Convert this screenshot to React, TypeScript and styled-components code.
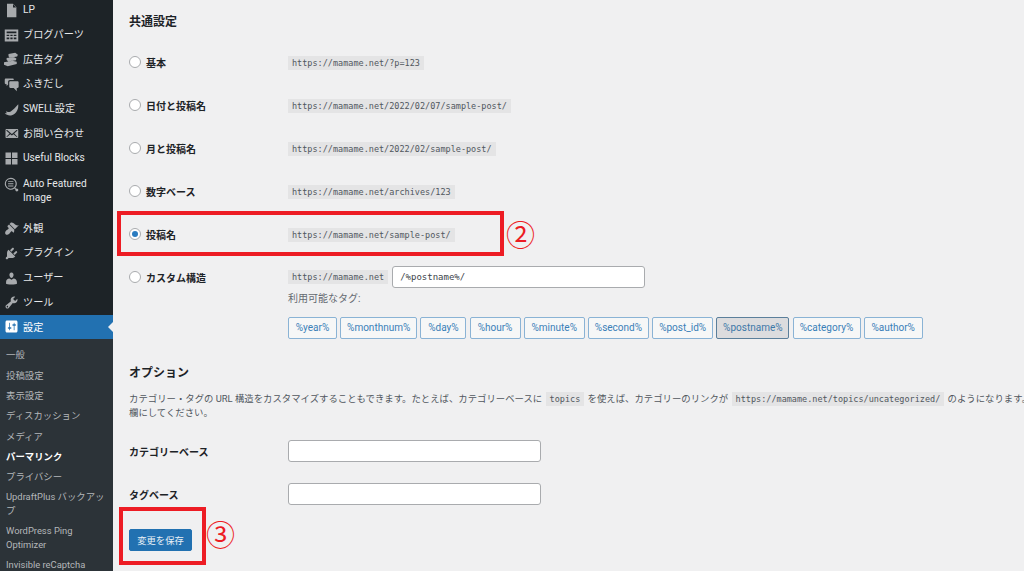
import styled, { createGlobalStyle } from 'styled-components';

const GlobalStyle = createGlobalStyle`
  html, body {
    margin: 0;
    padding: 0;
    width: 1024px;
    height: 571px;
    overflow: hidden;
    background: #f0f0f1;
    font-family: Roboto, "Noto Sans CJK JP", sans-serif;
  }
`;

const PATHS: Record<string, string> = {
  page: 'M4 1h8l4.500 4.500V19H4V1zm8 .8V6h4.200L12 1.800z',
  table: 'M1 2h18v16H1V2zm2.500 2.500V7h13V4.500h-13zm0 4.500v1.800h3.500V9H3.500zm5 0v1.800h3V9h-3zm4.500 0v1.800h3.500V9H13zm-9.500 3.500V15h3.500v-2.500H3.500zm5 0V15h3v-2.500h-3zm4.500 0V15h3.500v-2.500H13z',
  ads: 'M6 2.500 15 1l3.500 2.500-1 2.500L7.500 7.500 6 5.500v-3zM3.500 8 13 6.500l3.500 2-.5 2.500-10 1.500-2.500-2V8zM0 13.500 11 11.500l6 1.500v3L5 19l-5-2v-3.500z',
  comments: 'M2.500 2h9c1 0 1.500.6 1.500 1.500V4H8C6.400 4 5.500 5 5.500 6.500V10l-2 2V9.500h-1C1.600 9.500 1 9 1 8V3.500C1 2.600 1.600 2 2.500 2zm6 3.500h9.500c.9 0 1.500.6 1.500 1.500v6c0 .9-.6 1.500-1.500 1.500h-1V19l-4-4.500H8.500C7.600 14.500 7 13.900 7 13V7c0-.9.6-1.500 1.500-1.500z',
  wing: 'M19 3c.5 6-2 12.500-8.500 14.500-3.500 1-7 0-9.500-2.500 1 .2 2.200.2 3-.3-1-.6-1.500-1.500-1.500-2.500 1.500 1.300 4 1.500 6.500.3 3.500-1.800 6-5.500 10-9.500z',
  email: 'M19 14.500v-9c0-.83-.67-1.500-1.500-1.500H3.490c-.83 0-1.500.67-1.500 1.500v9c0 .83.67 1.500 1.500 1.500H17.500c.83 0 1.500-.67 1.500-1.500zm-1.310-9.110c.33.33.15.67-.03.84L13.600 9.950l3.900 4.060c.12.14.2.36.06.51-.13.16-.43.15-.56.05l-4.370-3.730-2.140 1.950-2.130-1.950-4.370 3.730c-.13.1-.43.11-.56-.05-.14-.15-.06-.37.06-.51l3.900-4.060-4.060-3.720c-.18-.17-.36-.51-.03-.84s.67-.17.95.07l6.240 5.040 6.250-5.040c.28-.24.62-.4.950-.07z',
  grid: 'M2 2h7.300v7.300H2V2zm8.700 0H18v7.300h-7.300V2zM2 10.700h7.300V18H2v-7.300zm8.700 0H18V18h-7.300v-7.300z',
  search: 'M9 1a8 8 0 0 1 6 13.300l1.200 1.200c.9-.2 1.700 0 2.300.6.800.8.800 2 0 2.700-.8.800-2 .8-2.700 0-.6-.6-.8-1.400-.6-2.100l-1.300-1.300A8 8 0 1 1 9 1zm0 1.500a6.500 6.500 0 1 0 0 13 6.500 6.500 0 0 0 0-13zM5.500 5.500h7v1.300h-7V5.500zm0 2.900h7v1.300h-7V8.400zm0 2.800h7v1.300h-7v-1.300z',
  brush: 'M14.480 11.060L7.410 3.990l1.500-1.500c.5-.56 2.300-.47 3.510.32 1.210.8 1.430 1.280 2.910 2.100 1.180.64 2.450 1.260 4.450.85zm-.71.71L6.700 4.700 4.930 6.470c-.39.39-.39 1.020 0 1.410l1.060 1.060c.39.39.39 1.030 0 1.420-.6.6-1.430 1.110-2.210 1.690-.35.26-.7.53-1.010.84-1.340 1.340-1.770 3.500-.6 4.800 1.300 1.170 3.460.74 4.800-.6.31-.31.58-.66.84-1.010.58-.78 1.090-1.610 1.690-2.210.39-.39 1.030-.39 1.420 0l1.060 1.060c.39.39 1.020.39 1.410 0z',
  plugin: 'M13.110 4.360L9.870 7.600 8 5.730l3.240-3.240c.35-.34 1.050-.2 1.560.32.52.51.66 1.210.31 1.550zm-8 1.770l.91-1.120 9.010 9.010-1.190.84c-.71.71-2.630 1.160-3.820 1.160H6.140L4.900 17.260c-.59.59-1.540.59-2.120 0-.59-.58-.59-1.530 0-2.120l1.240-1.240v-3.880c0-1.130.4-3.190 1.090-3.890zm7.260 3.970l3.240-3.240c.34-.35 1.040-.21 1.550.31.52.51.66 1.210.31 1.550l-3.240 3.250z',
  user: 'M10 9.250c-2.270 0-2.730-3.440-2.730-3.440C7 4.020 7.820 2 9.970 2c2.160 0 2.980 2.020 2.710 3.810 0 0-.41 3.440-2.680 3.440zm0 2.570L12.720 10c2.390 0 4.520 2.330 4.520 4.530v2.490s-3.650 1.130-7.240 1.130c-3.650 0-7.240-1.130-7.240-1.130v-2.490c0-2.250 1.940-4.480 4.470-4.480z',
  wrench: 'M16.680 9.770c-1.340 1.340-3.300 1.670-4.950.99l-5.410 6.520c-.99.99-2.590.99-3.580 0s-.99-2.590 0-3.570l6.520-5.420c-.68-1.650-.35-3.610.99-4.950 1.280-1.280 3.120-1.620 4.720-1.060l-2.890 2.890 2.820 2.820 2.860-2.870c.53 1.580.18 3.390-1.080 4.650zM3.810 16.210c.4.39 1.040.39 1.430 0 .4-.4.4-1.040 0-1.430-.39-.4-1.030-.4-1.430 0-.39.39-.39 1.030 0 1.430z',
  settings: 'M18 16V4c0-1.100-.9-2-2-2H4c-1.100 0-2 .9-2 2v12c0 1.100.9 2 2 2h12c1.100 0 2-.9 2-2zM8 11h1c.55 0 1 .45 1 1s-.45 1-1 1H8v1.500c0 .28-.22.5-.5.5s-.5-.22-.5-.5V13H6c-.55 0-1-.45-1-1s.45-1 1-1h1V5.500c0-.28.22-.5.5-.5s.5.22.5.5V11zm5-2h-1c-.55 0-1-.45-1-1s.45-1 1-1h1V5.500c0-.28.22-.5.5-.5s.5.22.5.5V7h1c.55 0 1 .45 1 1s-.45 1-1 1h-1v5.500c0 .28-.22.5-.5.5s-.5-.22-.5-.5V9z',
};

const MENU_TOP = [
  { icon: 'page', label: 'LP' },
  { icon: 'table', label: 'ブログパーツ' },
  { icon: 'ads', label: '広告タグ' },
  { icon: 'comments', label: 'ふきだし' },
  { icon: 'wing', label: 'SWELL設定' },
  { icon: 'email', label: 'お問い合わせ' },
  { icon: 'grid', label: 'Useful Blocks' },
  { icon: 'search', label: 'Auto Featured Image', tall: true },
];

const MENU_BOTTOM = [
  { icon: 'brush', label: '外観' },
  { icon: 'plugin', label: 'プラグイン' },
  { icon: 'user', label: 'ユーザー' },
  { icon: 'wrench', label: 'ツール' },
];

const SUB_MENU = [
  { label: '一般' },
  { label: '投稿設定' },
  { label: '表示設定' },
  { label: 'ディスカッション' },
  { label: 'メディア' },
  { label: 'パーマリンク', current: true },
  { label: 'プライバシー' },
  { label: 'UpdraftPlus バックアップ', tall: true },
  { label: 'WordPress Ping Optimizer', tall: true },
  { label: 'Invisible reCaptcha' },
];

const PERMALINKS = [
  { label: '基本', url: 'https://mamame.net/?p=123' },
  { label: '日付と投稿名', url: 'https://mamame.net/2022/02/07/sample-post/' },
  { label: '月と投稿名', url: 'https://mamame.net/2022/02/sample-post/' },
  { label: '数字ベース', url: 'https://mamame.net/archives/123' },
  { label: '投稿名', url: 'https://mamame.net/sample-post/', checked: true },
];

const TAGS = [
  { label: '%year%', width: 49 },
  { label: '%monthnum%', width: 77 },
  { label: '%day%', width: 46 },
  { label: '%hour%', width: 51 },
  { label: '%minute%', width: 61 },
  { label: '%second%', width: 61 },
  { label: '%post_id%', width: 61 },
  { label: '%postname%', width: 73, active: true },
  { label: '%category%', width: 68 },
  { label: '%author%', width: 59 },
];

const MenuIcon = ({ name }: { name: string }) => (
  <IconBox viewBox="0 0 20 20">
    <path d={PATHS[name]} fillRule="evenodd" />
  </IconBox>
);

export default function App() {
  return (
    <Page>
      <GlobalStyle />
      <Sidebar>
        {MENU_TOP.map((item) => (
          <MenuItem key={item.label} $tall={item.tall}>
            <MenuIcon name={item.icon} />
            <MenuLabel>{item.label}</MenuLabel>
          </MenuItem>
        ))}
        <MenuGap />
        {MENU_BOTTOM.map((item) => (
          <MenuItem key={item.label}>
            <MenuIcon name={item.icon} />
            <MenuLabel>{item.label}</MenuLabel>
          </MenuItem>
        ))}
        <MenuItemActive>
          <MenuIcon name="settings" />
          <MenuLabel>設定</MenuLabel>
          <ActiveArrow />
        </MenuItemActive>
        <SubMenu>
          {SUB_MENU.map((item) => (
            <SubItem key={item.label} $current={item.current} $tall={item.tall}>
              {item.label}
            </SubItem>
          ))}
        </SubMenu>
      </Sidebar>

      <Main>
        <HeadingFirst>共通設定</HeadingFirst>
        {PERMALINKS.map((row) => (
          <FormRow key={row.label}>
            <RadioLabel>
              <Radio $checked={row.checked} />
              {row.label}
            </RadioLabel>
            <div>
              <Code>{row.url}</Code>
            </div>
          </FormRow>
        ))}
        <CustomRow>
          <RadioLabel>
            <Radio />
            カスタム構造
          </RadioLabel>
          <div>
            <CustomLine>
              <Code>https://mamame.net</Code>
              <TextInput defaultValue="/%postname%/" />
            </CustomLine>
            <TagCaption>利用可能なタグ:</TagCaption>
            <TagList>
              {TAGS.map((tag) => (
                <TagButton key={tag.label} $active={tag.active} $width={tag.width}>
                  {tag.label}
                </TagButton>
              ))}
            </TagList>
          </div>
        </CustomRow>

        <HeadingOption>オプション</HeadingOption>
        <Description>
          カテゴリー・タグの URL 構造をカスタマイズすることもできます。たとえば、カテゴリーベースに <InlineCode>topics</InlineCode> を使えば、カテゴリーのリンクが{' '}
          <InlineCode>https://mamame.net/topics/uncategorized/</InlineCode> のようになります。
          <br />
          欄にしてください。
        </Description>
        <FieldRow>
          <FieldLabel>カテゴリーベース</FieldLabel>
          <TextInput />
        </FieldRow>
        <FieldRow>
          <FieldLabel>タグベース</FieldLabel>
          <TextInput />
        </FieldRow>
        <SaveButton>変更を保存</SaveButton>

        <MarkPermalink />
        <NumberPermalink>②</NumberPermalink>
        <MarkSave />
        <NumberSave>③</NumberSave>
      </Main>
    </Page>
  );
}

const Page = styled.div`
  display: flex;
  width: 1024px;
  height: 571px;
  overflow: hidden;
  position: relative;
`;

const Sidebar = styled.nav`
  width: 113px;
  flex-shrink: 0;
  height: 571px;
  overflow: hidden;
  background: #1d2327;
  color: #f0f0f1;
  font-size: 10.200px;
`;

const MenuItem = styled.div<{ $tall?: boolean }>`
  display: flex;
  align-items: ${(props) => (props.$tall ? 'flex-start' : 'center')};
  gap: 4px;
  box-sizing: border-box;
  height: ${(props) => (props.$tall ? '37.500px' : '24.700px')};
  padding-top: ${(props) => (props.$tall ? '6.500px' : '0')};
  padding-left: 4px;
  line-height: 14px;
  color: #e6e8ea;

  &:first-child {
    margin-top: -2px;
  }
`;

const MenuGap = styled.div`
  height: 8px;
`;

const IconBox = styled.svg`
  width: 15px;
  height: 15px;
  flex-shrink: 0;
  fill: #a7aaad;
`;

const MenuLabel = styled.span`
  display: block;
  width: 80px;
`;

const MenuItemActive = styled.div`
  display: flex;
  align-items: center;
  gap: 4px;
  height: 23.500px;
  padding-left: 4px;
  background: #2271b1;
  color: #ffffff;
  position: relative;

  svg {
    fill: #ffffff;
  }
`;

const ActiveArrow = styled.span`
  position: absolute;
  right: 0;
  top: 7px;
  border: 5.500px solid transparent;
  border-right-color: #f0f0f1;
  border-left-width: 0;
`;

const SubMenu = styled.div`
  background: #2c3338;
  padding-top: 6.500px;
  height: 240px;
`;

const SubItem = styled.div<{ $current?: boolean; $tall?: boolean }>`
  display: flex;
  align-items: center;
  min-height: ${(props) => (props.$tall ? '33.700px' : '20.350px')};
  padding: 0 2px 0 6px;
  line-height: 14px;
  font-size: 9.400px;
  color: ${(props) => (props.$current ? '#ffffff' : '#b4b7ba')};
  font-weight: ${(props) => (props.$current ? 700 : 400)};
`;

const Main = styled.main`
  flex: 1;
  min-width: 0;
  padding-left: 16px;
  color: #3c434a;
  font-size: 10px;
`;

const HeadingFirst = styled.h2`
  margin: 0;
  height: 40.500px;
  display: flex;
  align-items: center;
  padding-top: 1px;
  box-sizing: border-box;
  font-size: 12px;
  font-weight: 700;
  color: #1d2327;
`;

const FormRow = styled.div`
  display: grid;
  grid-template-columns: 159px 1fr;
  align-items: center;
  height: 43px;
`;

const CustomRow = styled.div`
  display: grid;
  grid-template-columns: 159px 1fr;
  padding-top: 11px;
`;

const RadioLabel = styled.label`
  display: flex;
  align-items: center;
  gap: 5px;
  height: 21px;
  font-size: 10px;
  font-weight: 700;
  color: #1d2327;
`;

const Radio = styled.span<{ $checked?: boolean }>`
  box-sizing: border-box;
  width: 12px;
  height: 12px;
  border-radius: 50%;
  border: 1px solid #a9abae;
  background: #ffffff;
  display: flex;
  align-items: center;
  justify-content: center;

  &::after {
    content: '';
    display: ${(props) => (props.$checked ? 'block' : 'none')};
    width: 6px;
    height: 6px;
    border-radius: 50%;
    background: #2b7cc0;
  }
`;

const Code = styled.code`
  background: #e4e4e5;
  padding: 2px 4px;
  font-family: "DejaVu Sans Mono", "Liberation Mono", monospace;
  font-size: 8.500px;
  color: #50575e;
`;

const InlineCode = styled(Code)`
  margin: 0 1px;
`;

const CustomLine = styled.div`
  display: flex;
  align-items: center;
  gap: 4px;
  height: 21px;
`;

const TextInput = styled.input`
  box-sizing: border-box;
  width: 253px;
  height: 22px;
  padding: 0 7px;
  background: #ffffff;
  border: 1px solid #a9abae;
  border-radius: 3px;
  font-family: "DejaVu Sans Mono", "Liberation Mono", monospace;
  font-size: 9px;
  color: #3c434a;
`;

const TagCaption = styled.div`
  margin-top: 4px;
  height: 14px;
  line-height: 14px;
  font-size: 10px;
  color: #646970;
`;

const TagList = styled.div`
  display: flex;
  gap: 3.200px;
  margin-top: 11px;
`;

const TagButton = styled.button<{ $active?: boolean; $width: number }>`
  box-sizing: border-box;
  width: ${(props) => props.$width}px;
  height: 22px;
  padding: 0;
  border: 1px solid ${(props) => (props.$active ? '#5b7f9b' : '#8ab3d5')};
  border-radius: 2px;
  background: ${(props) => (props.$active ? '#dcdcde' : '#f6f7f7')};
  color: ${(props) => (props.$active ? '#3d78a8' : '#3a80b8')};
  font-family: Roboto, sans-serif;
  font-size: 10px;
`;

const HeadingOption = styled.h2`
  margin: 26px 0 0;
  height: 17px;
  line-height: 17px;
  font-size: 12px;
  font-weight: 700;
  color: #1d2327;
`;

const Description = styled.p`
  margin: 10px 0 10px;
  width: 1000px;
  white-space: nowrap;
  line-height: 14px;
  font-size: 9.400px;
  color: #50575e;
`;

const FieldRow = styled.div`
  display: grid;
  grid-template-columns: 159px 1fr;
  align-items: center;
  height: 43px;
`;

const FieldLabel = styled.label`
  font-size: 10px;
  font-weight: 700;
  color: #1d2327;
`;

const SaveButton = styled.button`
  display: block;
  box-sizing: border-box;
  width: 63px;
  height: 22px;
  margin-top: 13px;
  padding: 0;
  border: 1px solid #2271b1;
  border-radius: 2px;
  background: #2271b1;
  color: #e8f0f6;
  font-family: "Noto Sans CJK JP", sans-serif;
  font-size: 9.300px;
`;

const MarkPermalink = styled.div`
  position: absolute;
  left: 117px;
  top: 211px;
  width: 387px;
  height: 45px;
  box-sizing: border-box;
  border: 4px solid #ed1c24;
`;

const MarkSave = styled.div`
  position: absolute;
  left: 119px;
  top: 507px;
  width: 87px;
  height: 58px;
  box-sizing: border-box;
  border: 4px solid #ed1c24;
`;

const NumberPermalink = styled.span`
  position: absolute;
  left: 506px;
  top: 213px;
  font-family: "Noto Sans CJK JP", sans-serif;
  font-size: 29px;
  line-height: 40px;
  color: #ed1c24;
`;

const NumberSave = styled.span`
  position: absolute;
  left: 206px;
  top: 513px;
  font-family: "Noto Sans CJK JP", sans-serif;
  font-size: 29px;
  line-height: 40px;
  color: #ed1c24;
`;
